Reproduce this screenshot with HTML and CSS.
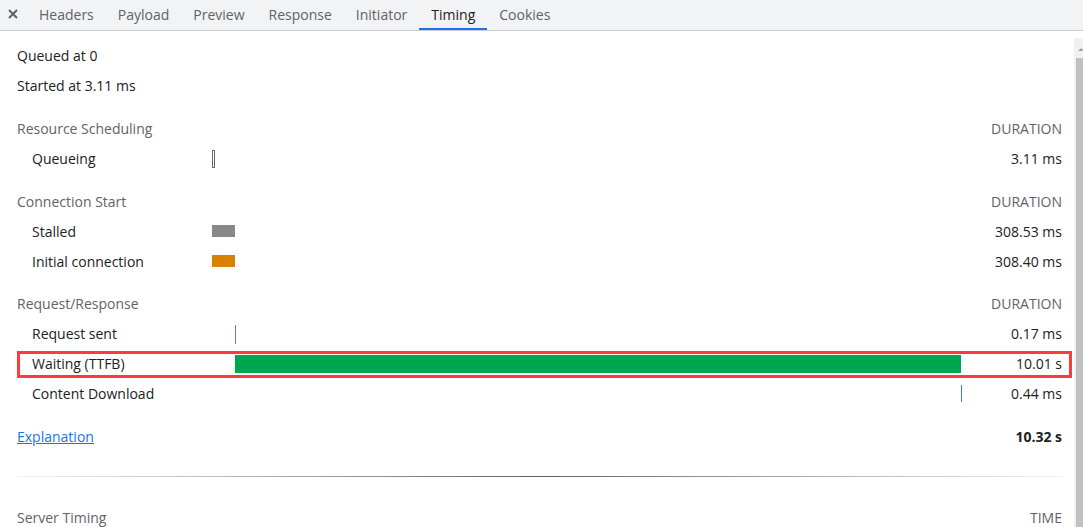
FILE: index.html
```html
<!DOCTYPE html>
<html>
<head>
<meta charset="utf-8">
<link rel="stylesheet" href="styles.css">
</head>
<body>
<div class="tabbar">
  <span class="close"><svg width="10" height="10" viewBox="0 0 10 10"><path d="M1 1L9 9M9 1L1 9" stroke="#5f6368" stroke-width="2"/></svg></span>
  <span class="tab">Headers</span>
  <span class="tab">Payload</span>
  <span class="tab">Preview</span>
  <span class="tab">Response</span>
  <span class="tab">Initiator</span>
  <span class="tab active">Timing</span>
  <span class="tab">Cookies</span>
</div>
<div class="main">
  <div class="content">
    <div class="line">Queued at 0</div>
    <div class="line">Started at 3.11 ms</div>

    <div class="section">
      <div class="row head"><span class="label">Resource Scheduling</span><span class="bars"></span><span class="dur">DURATION</span></div>
      <div class="row"><span class="label ind">Queueing</span><span class="bars"><i class="bar queue" style="left:0;width:3px"></i></span><span class="dur">3.11 ms</span></div>
    </div>

    <div class="section">
      <div class="row head"><span class="label">Connection Start</span><span class="bars"></span><span class="dur">DURATION</span></div>
      <div class="row"><span class="label ind">Stalled</span><span class="bars"><i class="bar stalled" style="left:0;width:23px"></i></span><span class="dur">308.53 ms</span></div>
      <div class="row"><span class="label ind">Initial connection</span><span class="bars"><i class="bar connect" style="left:0;width:23px"></i></span><span class="dur">308.40 ms</span></div>
    </div>

    <div class="section">
      <div class="row head"><span class="label">Request/Response</span><span class="bars"></span><span class="dur">DURATION</span></div>
      <div class="row"><span class="label ind">Request sent</span><span class="bars"><i class="bar sending" style="left:23px"></i></span><span class="dur">0.17 ms</span></div>
      <div class="row marked"><span class="label ind">Waiting (TTFB)</span><span class="bars"><i class="bar waiting" style="left:23px;width:726px"></i></span><span class="dur">10.01 s</span></div>
      <div class="row"><span class="label ind">Content Download</span><span class="bars"><i class="bar receiving" style="left:749px"></i></span><span class="dur">0.44 ms</span></div>
    </div>

    <div class="section">
      <div class="row total"><a class="link" href="#">Explanation</a><span class="sum">10.32 s</span></div>
    </div>

    <div class="divider"></div>

    <div class="row head"><span class="label">Server Timing</span><span class="bars"></span><span class="dur">TIME</span></div>
  </div>
  <div class="scrollbar">
    <div class="arrow"></div>
    <div class="thumb"></div>
  </div>
</div>
</body>
</html>
```
FILE: styles.css
```css
html, body {
  margin: 0;
  padding: 0;
  background: #ffffff;
  overflow: hidden;
}
body {
  font-family: "Open Sans", "Noto Sans", sans-serif;
  font-size: 14px;
  color: #202124;
  width: 1083px;
  height: 527px;
}
.tabbar {
  height: 30px;
  background: #f1f3f4;
  border-bottom: 1px solid #cacdd1;
  display: flex;
  align-items: stretch;
  box-sizing: content-box;
}
.close {
  width: 27px;
  display: flex;
  align-items: center;
  justify-content: center;
}
.close svg { display: block; margin-top: -3px; margin-left: -2px; }
.tab {
  padding: 0 12px;
  display: flex;
  align-items: center;
  color: #5f6368;
  border-bottom: 2px solid transparent;
  box-sizing: border-box;
  height: 30px;
}
.tab.active {
  color: #202124;
  border-bottom-color: #1a73e8;
}
.main {
  display: flex;
  height: 496px;
}
.content {
  flex: 1;
  padding: 10px 12px 0 17px;
  min-width: 0;
}
.line {
  height: 30px;
  line-height: 30px;
  color: #202124;
}
.section { margin-top: 12.5px; }
.row {
  display: flex;
  height: 30px;
  align-items: center;
  position: relative;
}
.label {
  width: 195px;
  flex: none;
  white-space: nowrap;
}
.label.ind {
  padding-left: 15px;
  box-sizing: border-box;
  color: #202124;
}
.head .label, .head .dur { color: #5f6368; }
.bars {
  flex: 1;
  position: relative;
  align-self: stretch;
}
.dur {
  width: 100px;
  flex: none;
  text-align: right;
  color: #202124;
}
.bar {
  position: absolute;
  display: block;
}
.bar.queue {
  top: 6px;
  height: 18px;
  border: 1px solid #6b6b6b;
  box-sizing: border-box;
  background: #ffffff;
}
.bar.stalled {
  top: 9px;
  height: 12px;
  background: #888888;
}
.bar.connect {
  top: 9px;
  height: 12px;
  background: #d98200;
}
.bar.sending {
  top: 6px;
  height: 19px;
  width: 1px;
  background: #62868a;
}
.bar.waiting {
  top: 6px;
  height: 18px;
  background: #00a64d;
}
.bar.receiving {
  top: 6px;
  height: 17px;
  width: 1px;
  background: #2a87d0;
}
.marked::after {
  content: "";
  position: absolute;
  left: 0;
  right: -10px;
  top: 2px;
  bottom: 1px;
  border: 3px solid #ff3a3a;
  pointer-events: none;
}
.total { justify-content: space-between; }
.link {
  color: #1a73e8;
  text-decoration: underline;
}
.sum {
  font-weight: 700;
  color: #202124;
}
.divider {
  height: 1px;
  margin: 25px 0 25px 0;
  background: linear-gradient(to right, rgba(95,99,104,0.08), #5f6368 50%, rgba(95,99,104,0.08));
}
.scrollbar {
  width: 9px;
  margin-top: 7px;
  background: #f1f1f1;
  display: flex;
  flex-direction: column;
}
.arrow {
  height: 20px;
  position: relative;
}
.arrow::before {
  content: "";
  position: absolute;
  left: 4px;
  top: 10px;
  border-left: 3px solid transparent;
  border-right: 3px solid transparent;
  border-bottom: 3px solid #a3a3a3;
}
.thumb {
  flex: 1;
  margin-left: 2px;
  background: #c1c1c1;
}
```
